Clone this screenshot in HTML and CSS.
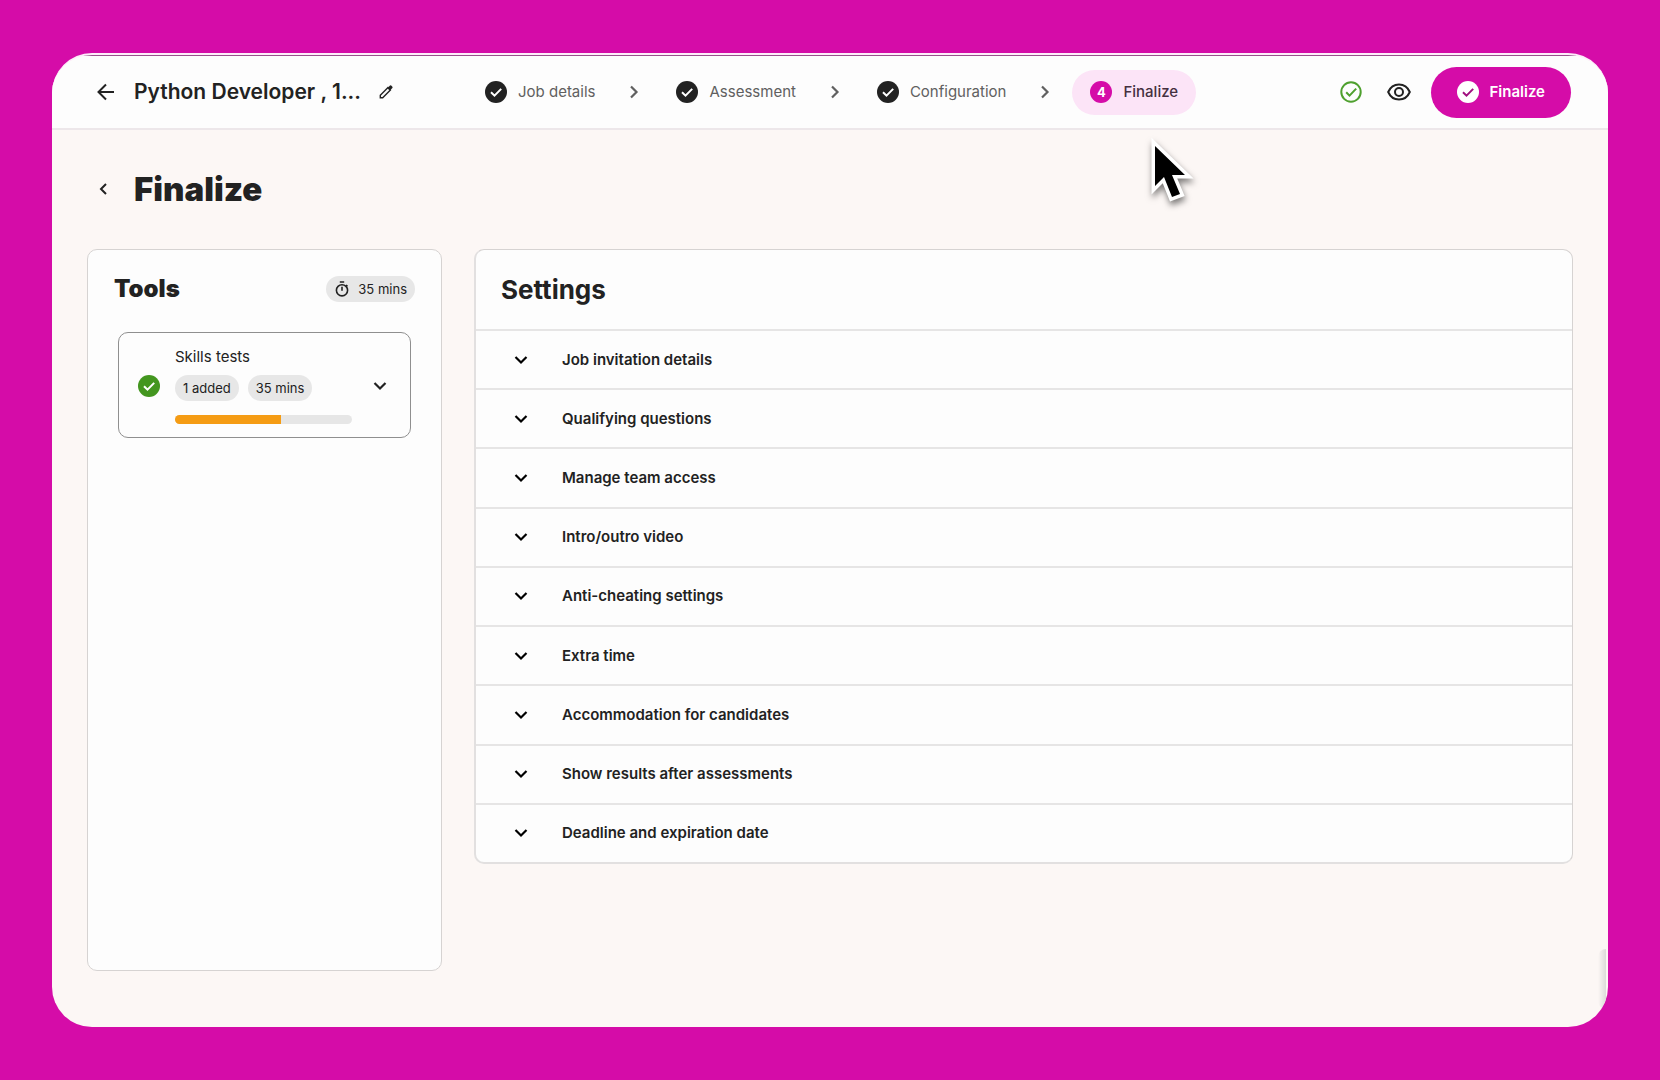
FILE: index.html
```html
<!doctype html>
<html lang="en">

<head>
    <meta charset="utf-8">
    <meta name="viewport" content="width=device-width, initial-scale=1">

    <title>Finalize</title>
    <link rel="stylesheet" href="styles.css">
</head>

<body>
    <!-- shared icons -->
    <svg class="sprite" aria-hidden="true">
        <symbol id="check-circle" viewBox="0 0 22 22">
            <circle cx="11" cy="11" r="11" fill="currentColor" />
            <path class="tick" d="M6 11.3l3.5 3.4 6.7-6.8" fill="none" stroke-width="2" />
        </symbol>
        <symbol id="chevron-down" viewBox="0 0 14 14">
            <path d="M1.5 4L7 9.5 12.5 4" fill="none" stroke="currentColor" stroke-width="2.2" />
        </symbol>
        <symbol id="chevron-right" viewBox="0 0 14 14">
            <path d="M4 1.5L9.5 7 4 12.5" fill="none" stroke="currentColor" stroke-width="2.2" />
        </symbol>
    </svg>

    <div class="window">
        <header class="topbar">
            <div class="job">
                <a href="#" class="back" aria-label="Back">
                    <svg width="18" height="18" viewBox="0 0 18 18"><path d="M17 9H1.8M9 1.5L1.5 9 9 16.5" fill="none" stroke="currentColor" stroke-width="2" /></svg>
                </a>
                <h2 class="job-name">Python Developer , 1...</h2>
                <button class="icon-btn" aria-label="Edit name">
                    <svg width="14" height="14" viewBox="0 0 14 14"><path d="M1.3 12.7v-2.4L9 2.6l2.4 2.4-7.7 7.7z" fill="none" stroke="currentColor" stroke-width="1.4" /><path d="M8.4 3.2L11 .6q.6-.5 1.2 0l1.2 1.2q.5.6 0 1.2l-2.6 2.6z" fill="currentColor" /></svg>
                </button>
            </div>

            <ol class="steps">
                <li><a href="#" class="step"><svg class="mark"><use href="#check-circle" /></svg>Job details</a></li>
                <li class="sep"><svg class="chev"><use href="#chevron-right" /></svg></li>
                <li><a href="#" class="step"><svg class="mark"><use href="#check-circle" /></svg>Assessment</a></li>
                <li class="sep"><svg class="chev"><use href="#chevron-right" /></svg></li>
                <li><a href="#" class="step"><svg class="mark"><use href="#check-circle" /></svg>Configuration</a></li>
                <li class="sep"><svg class="chev"><use href="#chevron-right" /></svg></li>
                <li><a href="#" class="step current" aria-current="step"><span class="number">4</span>Finalize</a></li>
            </ol>

            <div class="actions">
                <svg class="saved" width="22" height="22" viewBox="0 0 22 22"><circle cx="11" cy="11" r="9.7" fill="none" stroke="currentColor" stroke-width="2" /><path d="M6.2 11.3l3.3 3.3 6.7-7" fill="none" stroke="currentColor" stroke-width="2" /></svg>
                <button class="icon-btn" aria-label="Preview">
                    <svg width="24" height="18" viewBox="0 0 24 18"><path d="M1.2 9C3.3 4.2 7.3 1.5 12 1.5S20.7 4.2 22.8 9C20.7 13.8 16.7 16.5 12 16.5S3.3 13.8 1.2 9z" fill="none" stroke="currentColor" stroke-width="2" /><circle cx="12" cy="9" r="4" fill="none" stroke="currentColor" stroke-width="2" /></svg>
                </button>
                <button class="finalize"><svg class="mark"><use href="#check-circle" /></svg>Finalize</button>
            </div>
        </header>

        <main>
            <div class="heading">
                <a href="#" class="back" aria-label="Previous step">
                    <svg width="8" height="12" viewBox="0 0 8 12"><path d="M7 1L2 6l5 5" fill="none" stroke="currentColor" stroke-width="2" /></svg>
                </a>
                <h1>Finalize</h1>
            </div>

            <div class="columns">
                <section class="card tools">
                    <div class="tools-head">
                        <h2>Tools</h2>
                        <span class="badge time">
                            <svg width="14" height="16" viewBox="0 0 14 16"><circle cx="7" cy="9.3" r="5.6" fill="none" stroke="currentColor" stroke-width="1.6" /><path d="M4.8 1h4.4M7 5.8v4M11 4l1.5 1.3" fill="none" stroke="currentColor" stroke-width="1.6" /></svg>
                            35 mins
                        </span>
                    </div>
                    <div class="tool">
                        <svg class="mark done"><use href="#check-circle" /></svg>
                        <div class="tool-body">
                            <h3>Skills tests</h3>
                            <div class="badges">
                                <span class="badge">1 added</span>
                                <span class="badge">35 mins</span>
                            </div>
                            <div class="progress"><div class="progress-bar" style="width: 60%"></div></div>
                        </div>
                        <button class="icon-btn" aria-label="Expand skills tests"><svg class="chev"><use href="#chevron-down" /></svg></button>
                    </div>
                </section>

                <section class="card settings">
                    <h2>Settings</h2>
                    <button class="row"><svg class="chev"><use href="#chevron-down" /></svg>Job invitation details</button>
                    <button class="row"><svg class="chev"><use href="#chevron-down" /></svg>Qualifying questions</button>
                    <button class="row"><svg class="chev"><use href="#chevron-down" /></svg>Manage team access</button>
                    <button class="row"><svg class="chev"><use href="#chevron-down" /></svg>Intro/outro video</button>
                    <button class="row"><svg class="chev"><use href="#chevron-down" /></svg>Anti-cheating settings</button>
                    <button class="row"><svg class="chev"><use href="#chevron-down" /></svg>Extra time</button>
                    <button class="row"><svg class="chev"><use href="#chevron-down" /></svg>Accommodation for candidates</button>
                    <button class="row"><svg class="chev"><use href="#chevron-down" /></svg>Show results after assessments</button>
                    <button class="row"><svg class="chev"><use href="#chevron-down" /></svg>Deadline and expiration date</button>
                </section>
            </div>
        </main>
        <div class="scroll-hint"></div>
    </div>

    <svg class="cursor" width="50" height="74" viewBox="0 0 50 74" aria-hidden="true">
        <path d="M6 11v40l9-9 8 20 8-3-8-19h13z" fill="#000" stroke="#fff" stroke-width="7" paint-order="stroke" />
    </svg>
</body>

</html>
```
FILE: styles.css
```css
* {
    box-sizing: border-box;
}

body {
    margin: 0;
    min-height: 100vh;
    padding: 53px 52px;
    display: flex;
    background: #d50ca8;
    color: #222;
    font-family: Inter, "Liberation Sans", sans-serif;
    font-size: 15px;
    line-height: 20px;
}

h1, h2, h3 {
    margin: 0;
}

a {
    color: inherit;
    text-decoration: none;
}

button {
    font: inherit;
    color: inherit;
    background: none;
    border: 0;
    padding: 0;
    cursor: pointer;
}

svg {
    display: block;
    flex: none;
}

.sprite {
    position: absolute;
    width: 0;
    height: 0;
}

.tick {
    stroke: var(--tick, #fff);
}

.mark {
    width: 22px;
    height: 22px;
}

.chev {
    width: 14px;
    height: 14px;
}

.window {
    flex: 1;
    display: flex;
    flex-direction: column;
    position: relative;
    overflow: hidden;
    background: #fcf7f5;
    border-top: 2px solid #fdeefa;
    border-radius: 40px;
}

/* top bar */
.topbar {
    display: flex;
    align-items: center;
    height: 75px;
    padding: 0 37px 0 45px;
    background: #fdfdfd;
    border-top: 1px solid #98508c;
    border-bottom: 2px solid #ede7ea;
}

.job {
    display: flex;
    align-items: center;
    width: 388px;
}

.job-name {
    margin: 0 18px 0 19px;
    font-size: 21px;
    line-height: 28px;
    font-weight: 600;
    white-space: nowrap;
}

.steps {
    display: flex;
    align-items: center;
    margin: 0;
    padding: 0;
    list-style: none;
    color: #606060;
}

.step {
    display: flex;
    align-items: center;
    gap: 11px;
    white-space: nowrap;
}

.step .mark {
    color: #222;
}

.sep {
    margin: 0 35px 0 32px;
}

.sep:nth-last-child(2) {
    margin-right: 20px;
}

.current {
    height: 45px;
    padding: 0 18px;
    border-radius: 23px;
    background: #fce4f7;
    color: #443040;
    font-weight: 500;
}

.number {
    width: 22px;
    height: 22px;
    border-radius: 50%;
    background: #d50ca8;
    color: #fff;
    font-size: 13px;
    line-height: 22px;
    font-weight: 700;
    text-align: center;
}

.actions {
    display: flex;
    align-items: center;
    gap: 25px;
    margin-left: auto;
}

.saved {
    color: #4ea02e;
}

.finalize {
    --tick: #a0107f;
    display: flex;
    align-items: center;
    gap: 11px;
    height: 51px;
    padding: 0 26px;
    margin-left: -5px;
    border-radius: 26px;
    background: #d50ca8;
    color: #fff;
    font-weight: 600;
}

/* content */
main {
    flex: 1;
    display: flex;
    flex-direction: column;
    padding: 39px 35px 56px;
}

.heading {
    display: flex;
    align-items: center;
    gap: 27px;
    padding-left: 12px;
    margin-bottom: 40px;
}

h1 {
    font-size: 33px;
    line-height: 40px;
    font-weight: 900;
}

.columns {
    flex: 1;
    display: flex;
    gap: 32px;
}

.card {
    background: #fdfdfd;
    border: 1px solid #d6d3d2;
    border-radius: 10px;
}

.card h2 {
    font-size: 24px;
    line-height: 30px;
    font-weight: 900;
}

.tools {
    width: 355px;
    padding: 24px 26px;
}

.tools-head {
    display: flex;
    align-items: center;
    justify-content: space-between;
}

.badge {
    display: flex;
    align-items: center;
    height: 26px;
    padding: 0 8px;
    border-radius: 13px;
    background: #e7e7e7;
    font-size: 13px;
    white-space: nowrap;
}

.time {
    gap: 9px;
    padding-left: 9px;
}

.tool {
    display: flex;
    align-items: center;
    margin: 28px 4px 0;
    padding: 14px 23px 13px 19px;
    border: 1px solid #8f8f8f;
    border-radius: 10px;
}

.done {
    color: #43961f;
}

.tool-body {
    width: 177px;
    margin: 0 auto 0 15px;
}

.tool h3 {
    font-size: 15px;
    line-height: 20px;
    font-weight: 400;
}

.badges {
    display: flex;
    gap: 9px;
    margin: 8px 0 14px;
}

.progress {
    height: 9px;
    border-radius: 5px;
    background: #e6e6e6;
    overflow: hidden;
}

.progress-bar {
    height: 100%;
    background: #f59c14;
}

.settings {
    flex: 1;
    display: flex;
    flex-direction: column;
    align-self: flex-start;
    min-height: 615px;
    border-left: 2px solid #e2e0e0;
    border-bottom: 2px solid #e2e0e0;
}

.settings h2 {
    padding: 25px 25px 24px;
    font-size: 26px;
    font-weight: 700;
}

.row {
    flex: 1;
    display: flex;
    align-items: center;
    gap: 34px;
    padding: 0 38px;
    border-top: 2px solid #e6e5e5;
    font-weight: 600;
    text-align: left;
}

.row .chev {
    color: #000;
}

/* overlays */
.scroll-hint {
    position: absolute;
    right: 2px;
    bottom: 18px;
    width: 8px;
    height: 60px;
    background: linear-gradient(to right, transparent, #dcdad9);
    border-radius: 8px 0 0 8px;
}

.cursor {
    position: absolute;
    left: 1149px;
    top: 135px;
    filter: drop-shadow(1px 4px 3px rgba(0, 0, 0, .5));
}
```
